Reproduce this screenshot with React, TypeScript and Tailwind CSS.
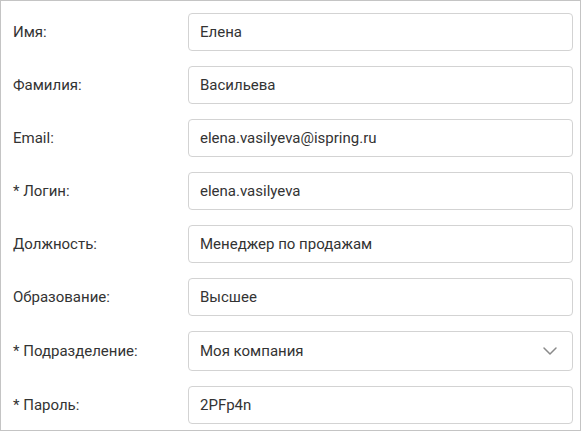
import React from "react";
import { ChevronDown } from "lucide-react";

const fields = [
  { label: "Имя:", value: "Елена" },
  { label: "Фамилия:", value: "Васильева" },
  { label: "Email:", value: "elena.vasilyeva@ispring.ru" },
  { label: "* Логин:", value: "elena.vasilyeva" },
  { label: "Должность:", value: "Менеджер по продажам" },
  { label: "Образование:", value: "Высшее" },
  { label: "* Подразделение:", value: "Моя компания", select: true },
  { label: "* Пароль:", value: "2PFp4n" },
];

const App = () => {
  return (
    <div className="bg-white" style={{ fontFamily: "Roboto, 'Liberation Sans', sans-serif" }}>
      <div className="w-[581px] h-[431px] border border-[#c4c4c4] pt-[12px] pl-[12px] flex flex-col gap-[15px]">
        {fields.map((f) => (
          <div key={f.label} className="flex items-center">
            <div className="w-[175px] text-[15px] text-[#333333]">{f.label}</div>
            <div
              className={`w-[385px] ${f.select ? "h-[40px]" : "h-[38px]"} border border-[#d3d3d3] rounded-[4px] flex items-center justify-between pl-[11px] pr-[10px] text-[15px] text-[#333333]`}
            >
              <span>{f.value}</span>
              {f.select ? (
                <ChevronDown className="w-[24px] h-[24px] text-[#8a8a8a]" strokeWidth={1.5} />
              ) : null}
            </div>
          </div>
        ))}
      </div>
    </div>
  );
};

export default App;
